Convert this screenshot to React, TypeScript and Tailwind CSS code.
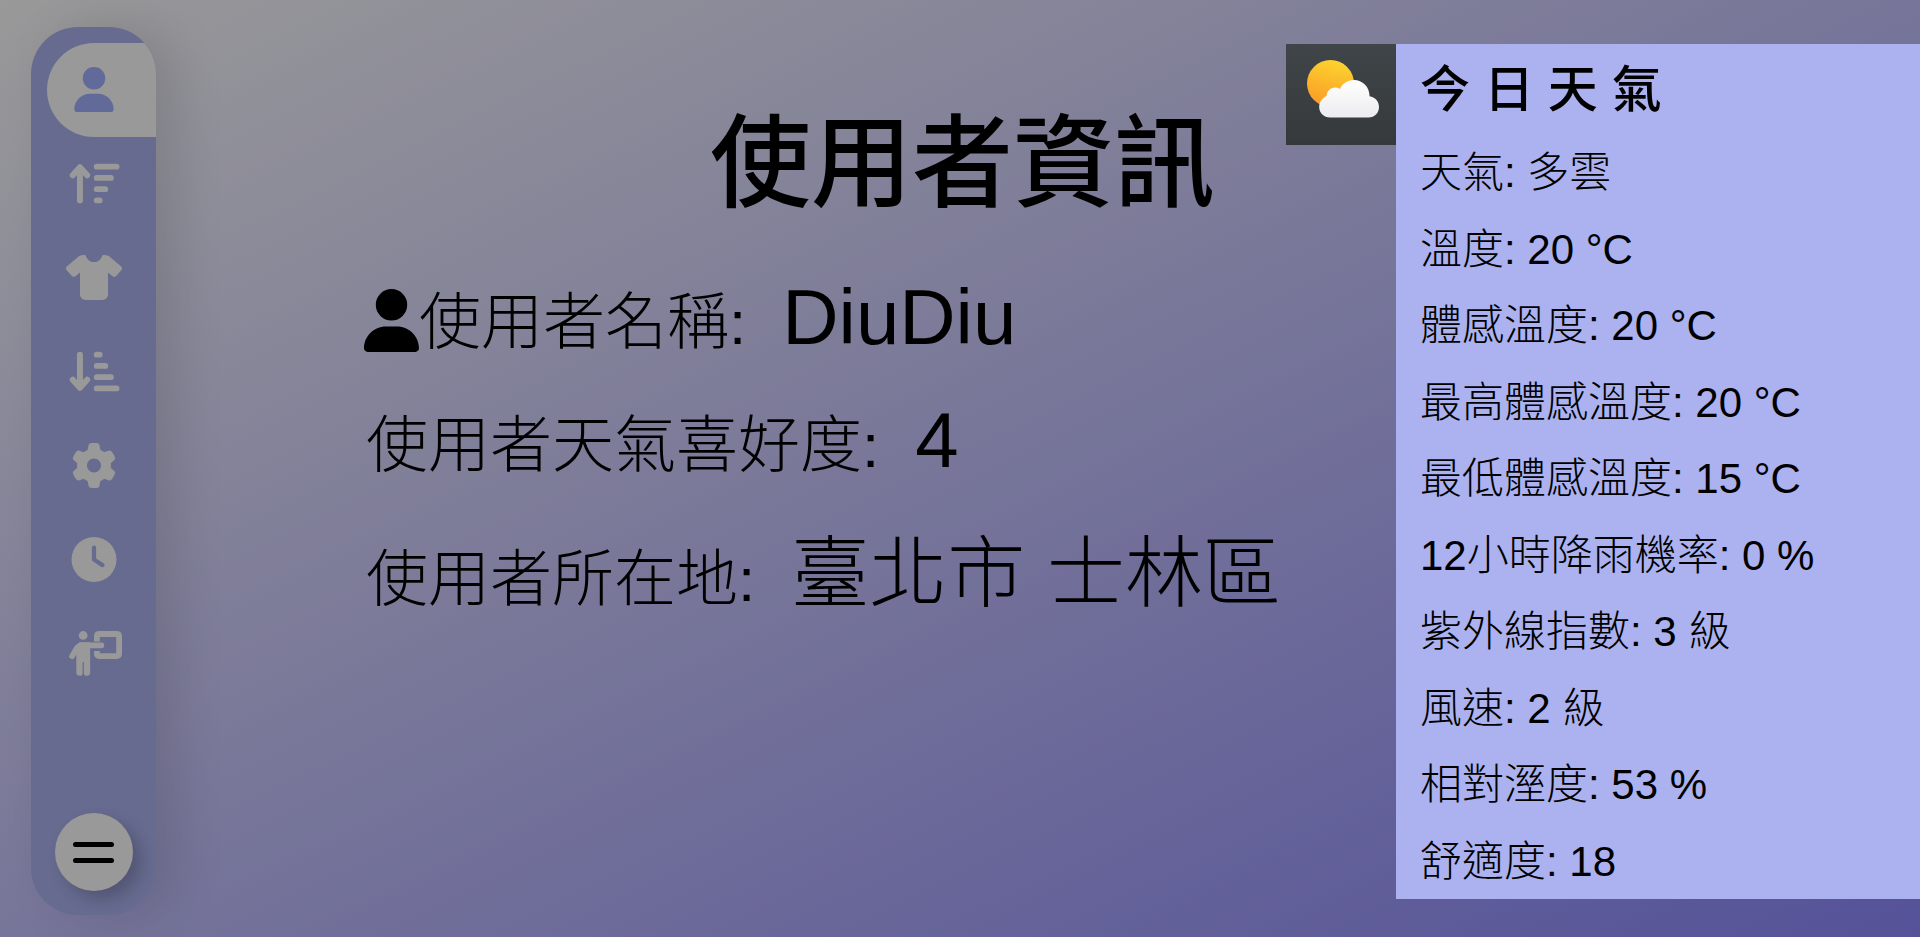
import type { ComponentType } from "react";
import { FaClock, FaGear, FaShirt, FaUser } from "react-icons/fa6";

type IconProps = { className?: string };
type NavItem = { label: string; icon: ComponentType<IconProps> };

function SortUpIcon({ className }: IconProps) {
  return (
    <svg
      viewBox="0 0 576 512"
      className={className}
      fill="none"
      stroke="currentColor"
      strokeWidth="68"
      strokeLinecap="round"
      strokeLinejoin="round"
      aria-hidden="true"
    >
      <path d="M128 448V70M46 162L128 70L210 162M320 64H544M320 192H480M320 320H416M320 448H352" />
    </svg>
  );
}

function SortDownIcon({ className }: IconProps) {
  return (
    <svg
      viewBox="0 0 576 512"
      className={className}
      fill="none"
      stroke="currentColor"
      strokeWidth="68"
      strokeLinecap="round"
      strokeLinejoin="round"
      aria-hidden="true"
    >
      <path d="M128 64V442M46 350L128 442L210 350M320 448H544M320 320H480M320 192H416M320 64H352" />
    </svg>
  );
}

function TeacherIcon({ className }: IconProps) {
  return (
    <svg
      viewBox="0 0 640 512"
      className={className}
      fill="none"
      stroke="currentColor"
      strokeLinecap="round"
      strokeLinejoin="round"
      aria-hidden="true"
    >
      <circle cx="196" cy="50" r="50" fill="currentColor" stroke="none" />
      <path
        d="M150 128H276V480C276 520 214 520 204 490V352H190V490C180 520 118 520 118 480V250L96 230Z"
        fill="currentColor"
        stroke="none"
      />
      <path d="M404 162H180C150 162 138 172 122 198L70 286" strokeWidth="66" />
      <path d="M353 120V62Q353 33 382 33H578Q607 33 607 62V256Q607 285 578 285H382Q353 285 353 256V228" strokeWidth="66" strokeLinecap="butt" />
    </svg>
  );
}

const navItems: NavItem[] = [
  { label: "使用者資訊", icon: FaUser },
  { label: "由高到低", icon: SortUpIcon },
  { label: "穿搭", icon: FaShirt },
  { label: "由低到高", icon: SortDownIcon },
  { label: "設定", icon: FaGear },
  { label: "時間", icon: FaClock },
  { label: "教學", icon: TeacherIcon },
];

const weather: [string, string][] = [
  ["天氣", "多雲"],
  ["溫度", "20 °C"],
  ["體感溫度", "20 °C"],
  ["最高體感溫度", "20 °C"],
  ["最低體感溫度", "15 °C"],
  ["12小時降雨機率", "0 %"],
  ["紫外線指數", "3 級"],
  ["風速", "2 級"],
  ["相對溼度", "53 %"],
  ["舒適度", "18"],
];

function Sidebar() {
  return (
    <nav className="mt-[27px] mb-[22px] ml-[31px] flex w-[125px] shrink-0 flex-col items-center rounded-[47px] bg-[#abb2ef] pb-6 shadow-[20px_0_50px_rgba(0,0,0,0.12)]">
      <ul className="w-full overflow-hidden rounded-t-[47px] pt-4 pl-4">
        {navItems.map(({ label, icon: Icon }, i) => (
          <li key={label}>
            <a
              href="#"
              aria-label={label}
              aria-current={i === 0 ? "page" : undefined}
              className={
                i === 0
                  ? "flex h-[94px] items-center justify-center rounded-l-full bg-white pr-4 pb-0.5 text-[#a3b1ff]"
                  : "flex h-[94px] items-center justify-center pr-4 pb-0.5 text-white"
              }
            >
              <Icon className="h-[45px] w-[56px]" />
            </a>
          </li>
        ))}
      </ul>
      <button
        type="button"
        aria-label="選單"
        className="mt-auto flex size-[78px] flex-col items-center justify-center gap-[11px] rounded-full bg-white shadow-[8px_8px_16px_rgba(0,0,0,0.2)]"
      >
        <span className="h-[5px] w-[41px] rounded-full bg-black" />
        <span className="h-[5px] w-[41px] rounded-full bg-black" />
      </button>
    </nav>
  );
}

function SunCloud() {
  return (
    <svg viewBox="0 0 110 101" className="block h-[101px] w-[110px]" role="img" aria-label="多雲">
      <defs>
        <linearGradient id="sky" x1="0" y1="0" x2="0" y2="1">
          <stop offset="0" stopColor="#404549" />
          <stop offset="1" stopColor="#35393b" />
        </linearGradient>
        <linearGradient id="sun" x1="0.6" y1="0" x2="0.35" y2="1">
          <stop offset="0" stopColor="#fcd32f" />
          <stop offset="1" stopColor="#fb9a27" />
        </linearGradient>
        <linearGradient id="cloud" x1="0" y1="0" x2="0" y2="1">
          <stop offset="0" stopColor="#ffffff" />
          <stop offset="1" stopColor="#ececee" />
        </linearGradient>
      </defs>
      <rect width="110" height="101" fill="url(#sky)" />
      <circle cx="44.5" cy="39.5" r="23.5" fill="url(#sun)" />
      <path
        d="M44 73.500C38 73.500 33.200 69 33.200 63C33.200 57.500 36.500 54 40.500 52C41 47 44.500 43.500 49 43.500C51 43.500 52.500 44 54 45C56.500 39.500 61.500 36 68 36C76.500 36 83.500 43 83.500 51.500V52.300C89 53 93 57.500 93 63C93 69 88.500 73.500 82.500 73.500Z"
        fill="url(#cloud)"
      />
    </svg>
  );
}

export default function App() {
  return (
    <div className="relative flex min-h-screen overflow-hidden bg-[linear-gradient(to_bottom_right,#ffffff,#8e89ff)] font-['Liberation_Sans','Noto_Sans_CJK_TC',sans-serif] text-black">
      <Sidebar />
      <main className="flex-1 pt-[104px] pl-[210px]">
        <h1 className="pl-[344px] text-[101px] leading-[120px] font-medium">使用者資訊</h1>
        <dl className="mt-8 font-light">
          <div className="-ml-0.5 flex h-[123px] items-baseline">
            <dt className="flex items-baseline text-[62px] leading-[122px]">
              <FaUser className="h-[63px] w-[55px] translate-y-2" />
              使用者名稱:
            </dt>
            <dd className="ml-9 text-[78px] leading-[122px]">DiuDiu</dd>
          </div>
          <div className="flex h-[134px] items-baseline">
            <dt className="text-[62px] leading-[122px]">使用者天氣喜好度:</dt>
            <dd className="ml-9 text-[78px] leading-[122px]">4</dd>
          </div>
          <div className="flex items-baseline">
            <dt className="text-[62px] leading-[122px]">使用者所在地:</dt>
            <dd className="ml-9 text-[78px] leading-[122px]">臺北市 士林區</dd>
          </div>
        </dl>
      </main>

      <div className="absolute inset-0 bg-black/40" />

      <aside className="absolute top-11 right-0 bottom-[38px] flex items-start">
        <SunCloud />
        <section className="flex h-full w-[524px] flex-col bg-[#abb2ef] pt-0.5 pl-6">
          <h2 className="text-[50px] leading-[88px] font-medium">今 日 天 氣</h2>
          <ul className="flex flex-1 flex-col text-[42px] font-light">
            {weather.map(([name, value]) => (
              <li key={name} className="flex flex-1 items-center pt-0.5 leading-[74px]">
                {name}: {value}
              </li>
            ))}
          </ul>
        </section>
      </aside>
    </div>
  );
}
